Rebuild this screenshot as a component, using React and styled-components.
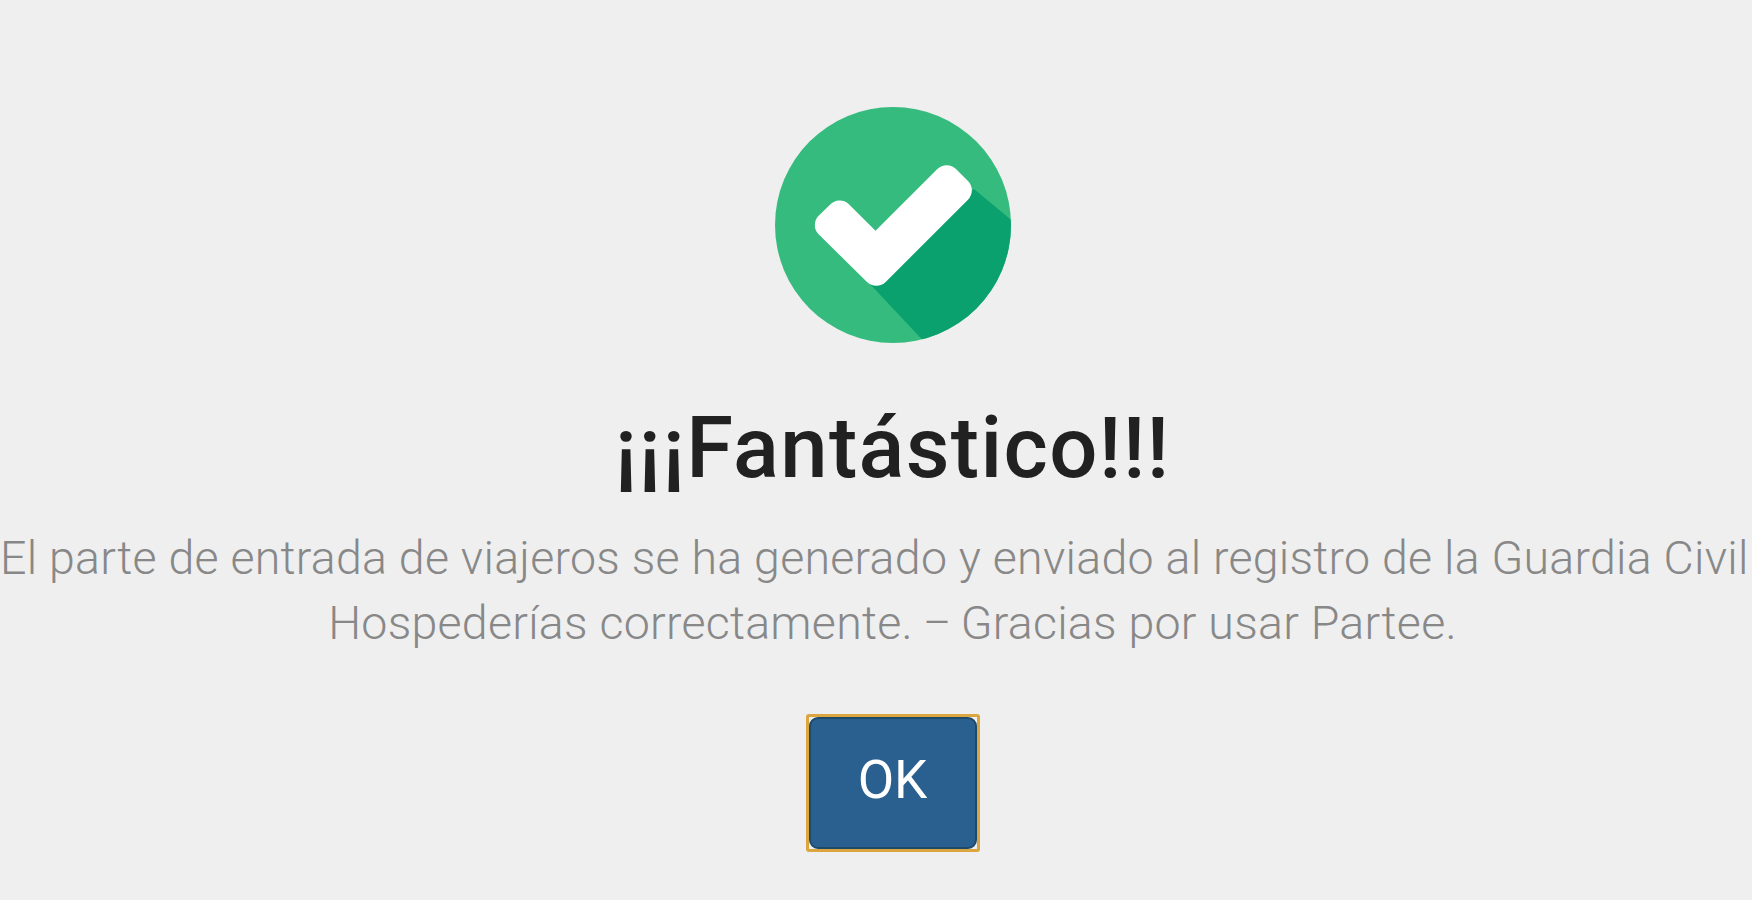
import React from "react";
import styled, { createGlobalStyle } from "styled-components";

const GlobalStyle = createGlobalStyle`
  body {
    margin: 0;
    background: #efefef;
    overflow: hidden;
  }
`;

const Wrapper = styled.main`
  display: flex;
  flex-direction: column;
  align-items: center;
  box-sizing: border-box;
  width: 1785px;
  height: 900px;
  padding-top: 107px;
  overflow: hidden;
  background: #efefef;
  font-family: Roboto, "Liberation Sans", sans-serif;
`;

const Icon = styled.svg`
  display: block;
  flex: none;
  width: 236px;
  height: 236px;
`;

const Title = styled.h1`
  margin: 55px 0 0;
  color: #212121;
  font-size: 85px;
  font-weight: 500;
  line-height: 100px;
  letter-spacing: 1.35px;
  white-space: nowrap;
`;

const Message = styled.p`
  width: 100%;
  margin: 28px 0 0;
  color: #888;
  font-size: 46.5px;
  font-weight: 300;
  line-height: 65px;
  letter-spacing: 0.26px;
  text-align: center;
  white-space: nowrap;
`;

const Line = styled.span`
  display: block;
  text-align: ${(props) => props.$align || "center"};
`;

const Dash = styled.span`
  display: inline-block;
  transform: scaleX(0.92);
  margin: 0 -3px;
`;

const FocusRing = styled.div`
  box-sizing: border-box;
  width: 174px;
  height: 138px;
  margin-top: 58px;
  border: 3px solid #dba53f;
  border-radius: 3px;
`;

const Button = styled.button`
  display: flex;
  align-items: center;
  justify-content: center;
  box-sizing: border-box;
  width: 100%;
  height: 100%;
  padding: 0 0 6px;
  border: 2px solid #1d4a6b;
  border-radius: 9px;
  background: #2a6090;
  color: #fff;
  font-family: inherit;
  font-size: 53px;
  line-height: 1;
`;

const CheckIcon = () => (
  <Icon viewBox="0 0 708 708" aria-hidden="true">
    <defs>
      <clipPath id="disc">
        <circle cx="397" cy="390" r="354" />
      </clipPath>
    </defs>
    <g transform="translate(-43 -36)">
      <circle cx="397" cy="390" r="354" fill="#36bb7e" />
      <path
        d="M327 566L492 742L500 760H760V382L640 282Z"
        fill="#0aa16e"
        clipPath="url(#disc)"
      />
      <path
        d="M208 329A40 40 0 0 1 264 327L344.5 407.5L530 222A40 40 0 0 1 586 222L622 258A40 40 0 0 1 622 314L375 561A40 40 0 0 1 319 561L173 417A40 40 0 0 1 173 363Z"
        fill="#fff"
      />
    </g>
  </Icon>
);

const App = () => {
  return (
    <>
      <GlobalStyle />
      <Wrapper>
        <CheckIcon />
        <Title>¡¡¡Fantástico!!!</Title>
        <Message>
          <Line $align="left">
            El parte de entrada de viajeros se ha generado y enviado al registro
            de la Guardia Civil
          </Line>
          <Line>
            Hospederías correctamente. <Dash>–</Dash> Gracias por usar Partee.
          </Line>
        </Message>
        <FocusRing>
          <Button type="button">OK</Button>
        </FocusRing>
      </Wrapper>
    </>
  );
};

export default App;
